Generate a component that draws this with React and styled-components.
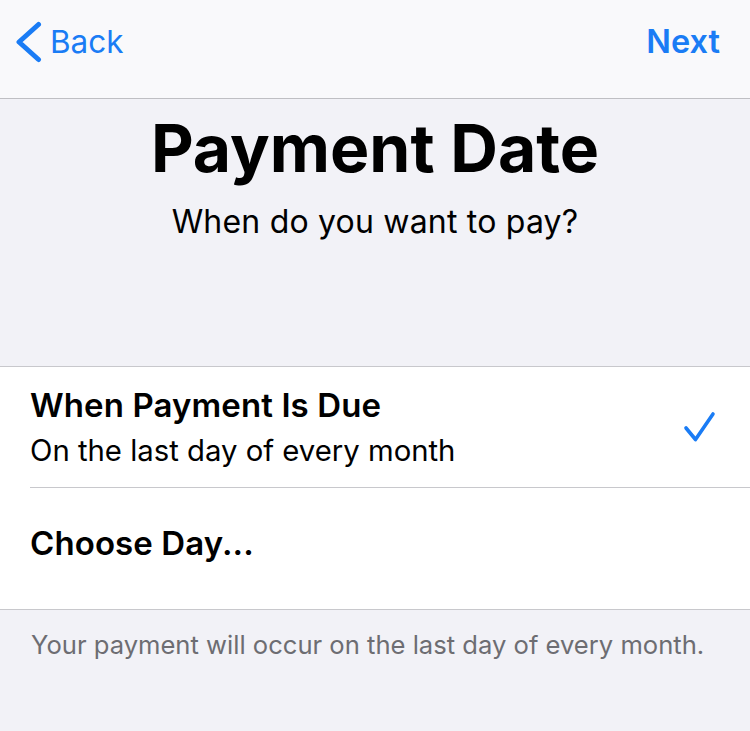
import React from "react";
import styled, { createGlobalStyle } from "styled-components";

const Global = createGlobalStyle`
  html, body { margin: 0; padding: 0; background: #f2f2f7; }
  body { font-family: Inter, "Noto Sans", sans-serif; -webkit-font-smoothing: antialiased; }
`;

const Page = styled.div`
  width: 750px;
  height: 731px;
  background: #f2f2f7;
  display: flex;
  flex-direction: column;
  overflow: hidden;
`;

const NavBar = styled.div`
  height: 99px;
  background: #f9f9fb;
  border-bottom: 1.5px solid #bfbfc3;
  display: flex;
  align-items: flex-start;
  justify-content: space-between;
  padding: 20px 30px 0 14px;
  box-sizing: border-box;
  flex-shrink: 0;
`;

const NavButton = styled.button`
  border: none;
  background: none;
  padding: 0;
  display: flex;
  align-items: center;
  gap: 8px;
  color: #1a7cf5;
  font-family: Inter, sans-serif;
  font-size: ${(p) => (p.$bold ? "32.5px" : "31.5px")};
  font-weight: ${(p) => (p.$bold ? 600 : 400)};
  letter-spacing: 0;
  line-height: 44px;
  height: 44px;
  cursor: pointer;
`;

const Header = styled.div`
  display: flex;
  flex-direction: column;
  align-items: center;
  padding-top: 9px;
  height: 267px;
  box-sizing: border-box;
  flex-shrink: 0;
`;

const Title = styled.h1`
  margin: 0;
  font-size: 66px;
  font-weight: 700;
  color: #000;
  letter-spacing: 0;
  line-height: 80px;
`;

const Subtitle = styled.p`
  margin: 14px 0 0;
  font-size: 32px;
  font-weight: 400;
  color: #000;
  letter-spacing: 0.2px;
  line-height: 40px;
`;

const List = styled.div`
  background: #fff;
  border-top: 1.5px solid #c8c8cc;
  border-bottom: 1.5px solid #c8c8cc;
  padding-left: 30px;
  flex-shrink: 0;
`;

const Row = styled.div`
  height: 121px;
  display: flex;
  align-items: center;
  justify-content: space-between;
  padding-right: 34px;
  padding-bottom: ${(p) => (p.$raised ? "12px" : "0")};
  box-sizing: border-box;
  border-bottom: ${(p) => (p.$last ? "none" : "1.5px solid #c8c8cc")};
`;

const RowText = styled.div`
  display: flex;
  flex-direction: column;
  gap: 7px;
`;

const RowTitle = styled.div`
  font-size: 33px;
  font-weight: 600;
  color: #000;
  letter-spacing: 0.1px;
  line-height: 40px;
`;

const RowSub = styled.div`
  font-size: 29.3px;
  font-weight: 400;
  color: #000;
  letter-spacing: 0;
  line-height: 38px;
`;

const Footer = styled.p`
  margin: 0;
  padding: 18px 30px 0 31px;
  font-size: 25.6px;
  color: #6d6d72;
  letter-spacing: 0;
  line-height: 34px;
`;

const Chevron = () => (
  <svg width="28" height="44" viewBox="0 0 28 44" fill="none">
    <path d="M24.5 4.5 L5 22 L24.5 39.5" stroke="#1a7cf5" strokeWidth="5" strokeLinecap="round" strokeLinejoin="round" />
  </svg>
);

const Check = () => (
  <svg width="34" height="34" viewBox="0 0 34 34" fill="none">
    <path d="M4 18 L13.5 29.5 L31 4" stroke="#1a7cf5" strokeWidth="3.6" strokeLinecap="round" strokeLinejoin="round" />
  </svg>
);

export default function App() {
  return (
    <Page>
      <Global />
      <NavBar>
        <NavButton>
          <Chevron />
          Back
        </NavButton>
        <NavButton $bold>Next</NavButton>
      </NavBar>
      <Header>
        <Title>Payment Date</Title>
        <Subtitle>When do you want to pay?</Subtitle>
      </Header>
      <List>
        <Row>
          <RowText>
            <RowTitle>When Payment Is Due</RowTitle>
            <RowSub>On the last day of every month</RowSub>
          </RowText>
          <Check />
        </Row>
        <Row $last $raised>
          <RowTitle>Choose Day...</RowTitle>
        </Row>
      </List>
      <Footer>Your payment will occur on the last day of every month.</Footer>
    </Page>
  );
}
